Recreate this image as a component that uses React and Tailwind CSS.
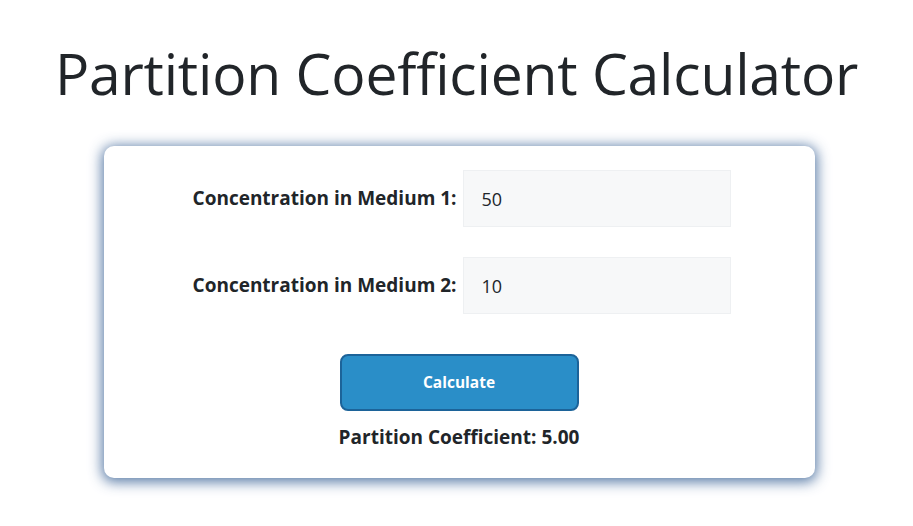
import React, { useState } from 'react';

export default function App() {
  const [c1, setC1] = useState('50');
  const [c2, setC2] = useState('10');
  const [result, setResult] = useState((50 / 10).toFixed(2));

  const calculate = () => {
    const a = parseFloat(c1);
    const b = parseFloat(c2);
    if (!isNaN(a) && !isNaN(b) && b !== 0) setResult((a / b).toFixed(2));
  };

  return (
    <div className="min-h-[526px] bg-white font-['Open_Sans',sans-serif] text-[#212529] flex flex-col items-center">
      <h1 className="mt-[36px] text-[57px] leading-[74px] font-normal tracking-[-0.2px]">
        Partition Coefficient Calculator
      </h1>

      <div className="mt-[36px] ml-[5px] w-[711px] bg-white rounded-[10px] shadow-[0_2px_13px_2px_rgba(60,100,150,0.85)] pt-[24px] pb-[26px] flex flex-col items-center">
        <div className="flex items-center gap-[6px] ml-[85px] self-start">
          <label className="w-[268px] text-right text-[19px] font-bold whitespace-nowrap">Concentration in Medium 1:</label>
          <input
            value={c1}
            onChange={(e) => setC1(e.target.value)}
            className="w-[268px] h-[57px] bg-[#f7f8f9] border border-[#eef0f2] px-[18px] text-[18px] outline-none"
          />
        </div>
        <div className="flex items-center gap-[6px] ml-[85px] self-start mt-[30px]">
          <label className="w-[268px] text-right text-[19px] font-bold whitespace-nowrap">Concentration in Medium 2:</label>
          <input
            value={c2}
            onChange={(e) => setC2(e.target.value)}
            className="w-[268px] h-[57px] bg-[#f7f8f9] border border-[#eef0f2] px-[18px] text-[18px] outline-none"
          />
        </div>

        <button
          onClick={calculate}
          className="mt-[40px] w-[239px] h-[57px] rounded-[8px] bg-[#2a8ec8] border-2 border-[#1c6399] text-white text-[15.5px] font-bold"
        >
          Calculate
        </button>

        <p className="mt-[12px] text-[19px] font-bold">Partition Coefficient: {result}</p>
      </div>
    </div>
  );
}
